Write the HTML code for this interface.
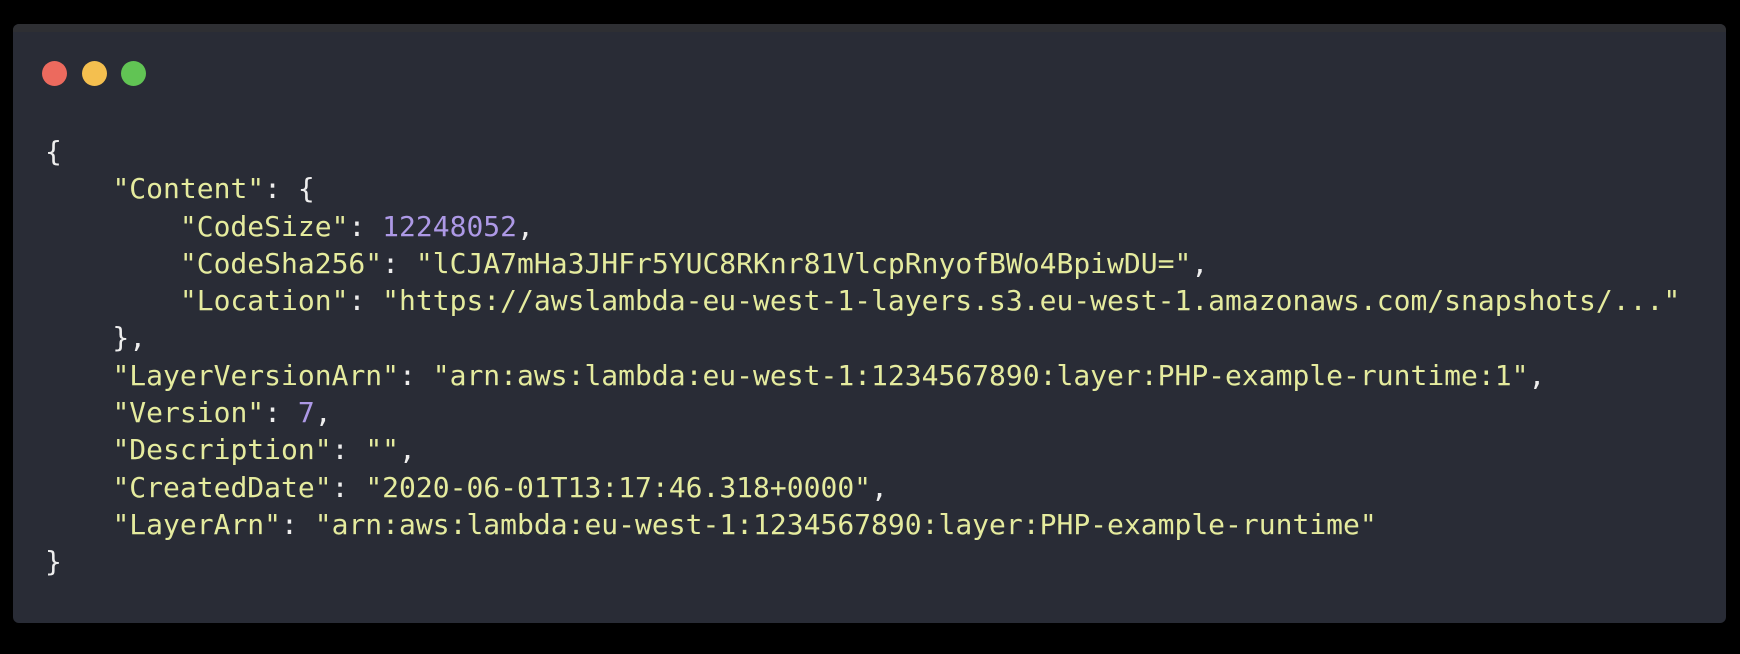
<!DOCTYPE html>
<html><head><meta charset="utf-8"><style>
html,body{margin:0;padding:0;background:#000;width:1740px;height:654px;overflow:hidden}
.win{position:absolute;left:13px;top:24px;width:1713px;height:599px;background:#292c36;border-radius:6px;overflow:hidden}
.strip{position:absolute;left:0;top:0;right:0;height:8px;background:#2e2f33}
.dot{position:absolute;top:37px;width:25px;height:25px;border-radius:50%}
pre{position:absolute;left:32px;top:109px;margin:0;font-family:"DejaVu Sans Mono","Liberation Mono",monospace;font-size:28px;line-height:37.3px;color:#eeeeee;white-space:pre}
.s{color:#e5eb9e}.n{color:#ad99e6}
</style></head><body>
<div class="win"><div class="strip"></div>
<div class="dot" style="left:29px;background:#ec6a5e"></div>
<div class="dot" style="left:69px;background:#f4bf4f"></div>
<div class="dot" style="left:108px;background:#61c454"></div>
<pre>{
    <span class="s">"Content"</span>: {
        <span class="s">"CodeSize"</span>: <span class="n">12248052</span>,
        <span class="s">"CodeSha256"</span>: <span class="s">"lCJA7mHa3JHFr5YUC8RKnr81VlcpRnyofBWo4BpiwDU="</span>,
        <span class="s">"Location"</span>: <span class="s">"https://awslambda-eu-west-1-layers.s3.eu-west-1.amazonaws.com/snapshots/..."</span>
    },
    <span class="s">"LayerVersionArn"</span>: <span class="s">"arn:aws:lambda:eu-west-1:1234567890:layer:PHP-example-runtime:1"</span>,
    <span class="s">"Version"</span>: <span class="n">7</span>,
    <span class="s">"Description"</span>: <span class="s">""</span>,
    <span class="s">"CreatedDate"</span>: <span class="s">"2020-06-01T13:17:46.318+0000"</span>,
    <span class="s">"LayerArn"</span>: <span class="s">"arn:aws:lambda:eu-west-1:1234567890:layer:PHP-example-runtime"</span>
}</pre>
</div>
</body></html>
